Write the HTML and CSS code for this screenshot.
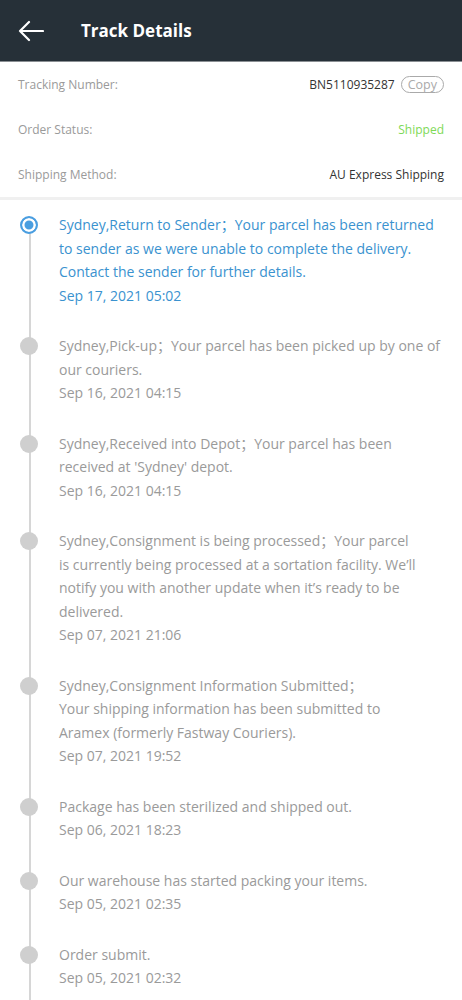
FILE: index.html
```html
<!DOCTYPE html>
<html lang="en">
<head>
    <meta charset="UTF-8">
    <meta name="viewport" content="width=device-width, initial-scale=1.0">
    <title>Track Details</title>
    <link rel="stylesheet" href="styles.css">
</head>
<body>
    <header class="topbar">
        <svg class="back" width="26" height="22" viewBox="0 0 26 22">
            <path d="M25 11H2M11 2L2 11l9 9" fill="none" stroke="#fff" stroke-width="2.2" stroke-linecap="round" stroke-linejoin="round"/>
        </svg>
        <h1>Track Details</h1>
    </header>

    <section class="info">
        <div class="row">
            <span class="label">Tracking Number:</span>
            <span class="value">BN5110935287 <span class="copy">Copy</span></span>
        </div>
        <div class="row">
            <span class="label">Order Status:</span>
            <span class="value shipped">Shipped</span>
        </div>
        <div class="row">
            <span class="label">Shipping Method:</span>
            <span class="value">AU Express Shipping</span>
        </div>
    </section>

    <ul class="timeline">
        <li class="step active">
            <p>Sydney,Return to Sender；Your parcel has been returned<br>to sender as we were unable to complete the delivery.<br>Contact the sender for further details.</p>
            <p>Sep 17, 2021 05:02</p>
        </li>
        <li class="step">
            <p>Sydney,Pick-up；Your parcel has been picked up by one of<br>our couriers.</p>
            <p>Sep 16, 2021 04:15</p>
        </li>
        <li class="step">
            <p>Sydney,Received into Depot；Your parcel has been<br>received at 'Sydney' depot.</p>
            <p>Sep 16, 2021 04:15</p>
        </li>
        <li class="step">
            <p>Sydney,Consignment is being processed；Your parcel<br>is currently being processed at a sortation facility. We’ll<br>notify you with another update when it’s ready to be<br>delivered.</p>
            <p>Sep 07, 2021 21:06</p>
        </li>
        <li class="step">
            <p>Sydney,Consignment Information Submitted；<br>Your shipping information has been submitted to<br>Aramex (formerly Fastway Couriers).</p>
            <p>Sep 07, 2021 19:52</p>
        </li>
        <li class="step">
            <p>Package has been sterilized and shipped out.</p>
            <p>Sep 06, 2021 18:23</p>
        </li>
        <li class="step">
            <p>Our warehouse has started packing your items.</p>
            <p>Sep 05, 2021 02:35</p>
        </li>
        <li class="step">
            <p>Order submit.</p>
            <p>Sep 05, 2021 02:32</p>
        </li>
    </ul>
</body>
</html>
```

FILE: styles.css
```css
body {
    font-family: "Open Sans", "Noto Sans CJK SC", Arial, sans-serif;
    background-color: #fff;
    margin: 0;
    padding: 0;
}

.topbar {
    display: flex;
    align-items: center;
    height: 62px;
    background-color: #263038;
    border-bottom: 1px solid #8a8f93;
    box-sizing: border-box;
    padding-left: 18px;
}

.back {
    display: block;
}

.topbar h1 {
    margin: 0 0 0 37px;
    font-size: 17px;
    font-weight: 700;
    color: #fff;
}

.info {
    padding: 0 18px;
    border-bottom: 3px solid #f0f0f0;
}

.row {
    display: flex;
    justify-content: space-between;
    align-items: center;
    height: 45px;
    font-size: 12px;
}

.label {
    color: #9a9a9a;
}

.value {
    color: #333;
    display: flex;
    align-items: center;
}

.value.shipped {
    color: #7ed957;
}

.copy {
    margin-left: 6px;
    padding: 0 6px;
    height: 17px;
    line-height: 16px;
    border: 1px solid #aaa;
    border-radius: 9px;
    color: #aaa;
    font-size: 12.5px;
    box-sizing: border-box;
}

.timeline {
    list-style: none;
    margin: 0;
    padding: 13px 8px 0 59px;
}

.step {
    position: relative;
    padding-bottom: 27px;
}

.step p {
    margin: 0;
    font-size: 14px;
    line-height: 23.5px;
    color: #9a9a9a;
    white-space: nowrap;
}

.step::before {
    content: "";
    position: absolute;
    left: -30px;
    top: 12px;
    bottom: -12px;
    width: 1.5px;
    background-color: #d6d6d6;
}

.step::after {
    content: "";
    position: absolute;
    left: -39px;
    top: 3px;
    width: 18px;
    height: 18px;
    border-radius: 50%;
    background-color: #cfcfcf;
}

.step.active p {
    color: #3a92cf;
}

.step.active::after {
    box-sizing: border-box;
    border: 2.5px solid #4a9ee0;
    background-color: #4a9ee0;
    box-shadow: inset 0 0 0 2.5px #fff;
}
```
